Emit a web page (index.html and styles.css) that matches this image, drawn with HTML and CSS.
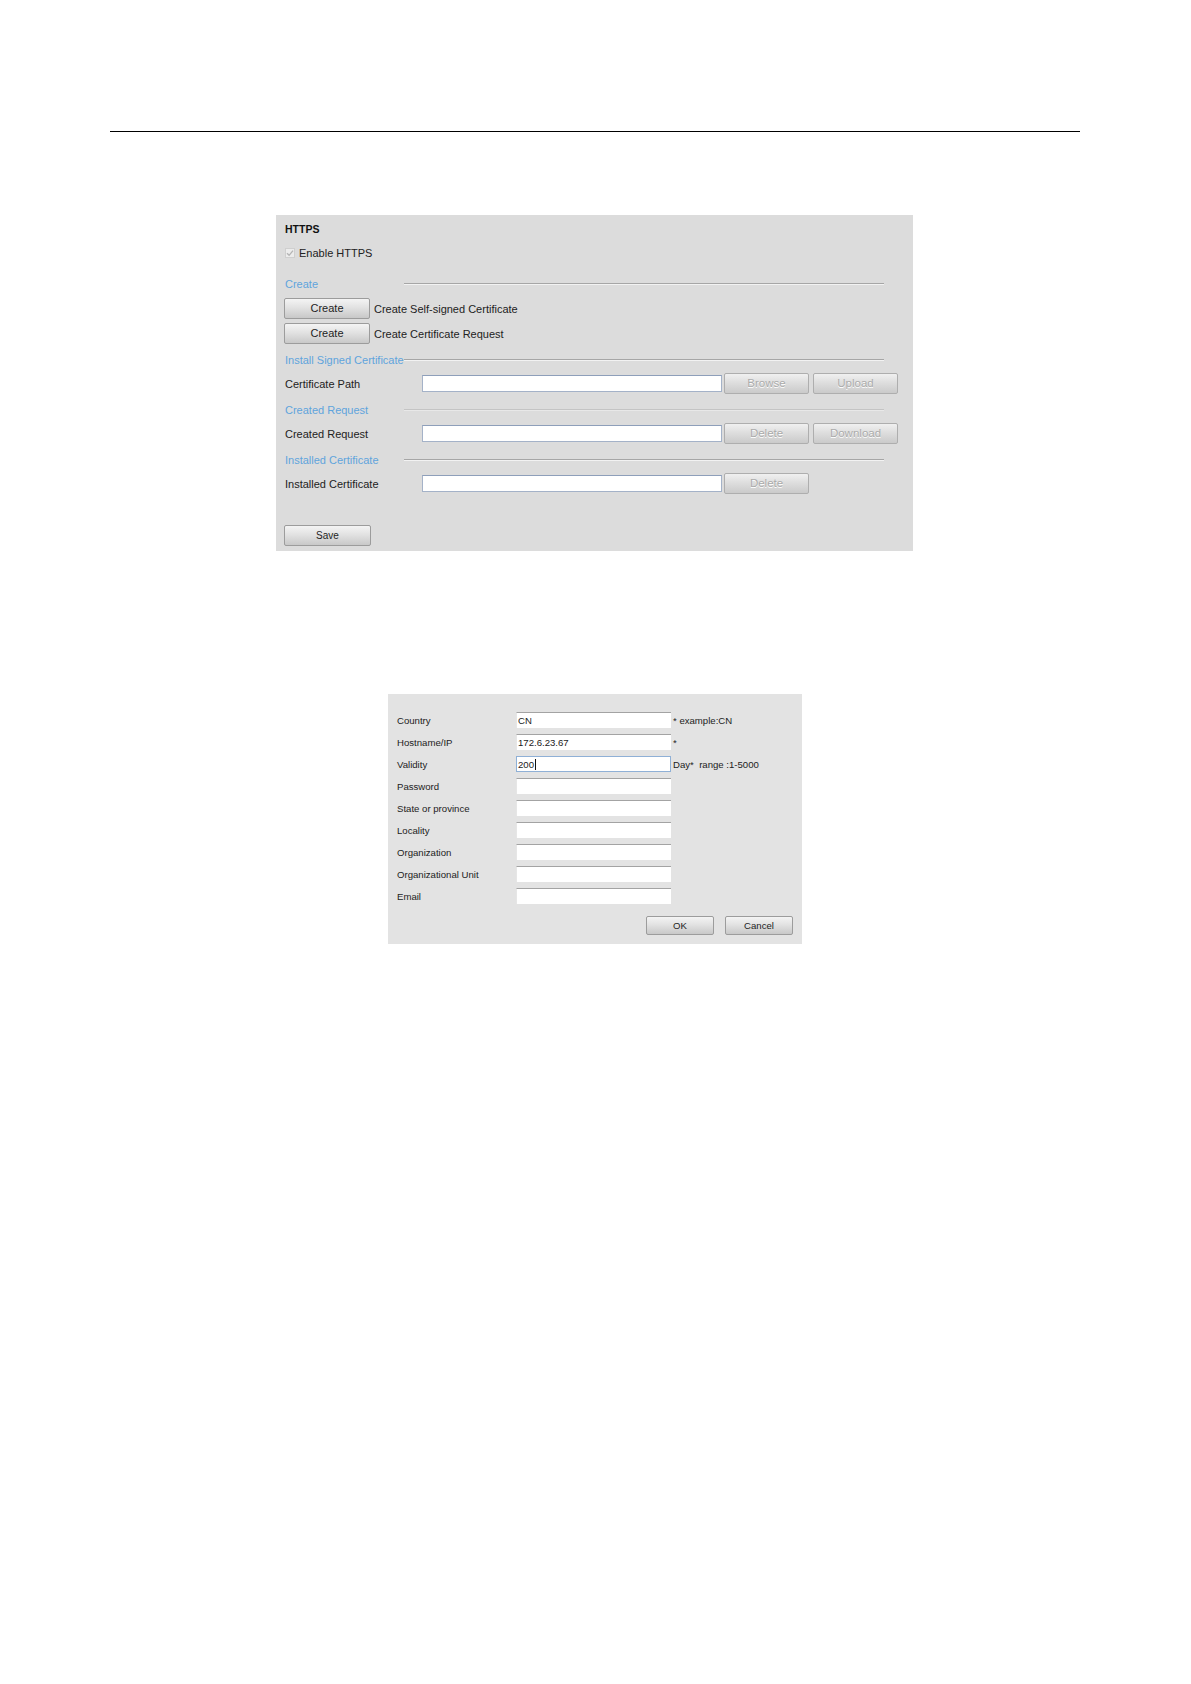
FILE: index.html
```html
<!DOCTYPE html>
<html>
<head>
<meta charset="utf-8">
<title>HTTPS</title>
<link rel="stylesheet" href="styles.css">
</head>
<body>
<div class="page">
  <div class="header-rule"></div>

  <div class="https-panel">
    <div class="title-row">HTTPS</div>
    <div class="check-row">
      <span class="checkbox"><svg width="8" height="8" viewBox="0 0 8 8"><path d="M1 4.2 L3.1 6.3 L7 1.6" fill="none" stroke="#b4b4b4" stroke-width="1.3"/></svg></span>
      <span>Enable HTTPS</span>
    </div>

    <div class="section s-create"><span class="section-label">Create</span><span class="section-line"></span></div>
    <div class="btn-row r1"><button class="btn btn-create">Create</button><span>Create Self-signed Certificate</span></div>
    <div class="btn-row r2"><button class="btn btn-create">Create</button><span>Create Certificate Request</span></div>

    <div class="section s-install"><span class="section-label">Install Signed Certificate</span><span class="section-line"></span></div>
    <div class="field-row">
      <span class="field-label">Certificate Path</span>
      <span class="field-input"></span>
      <button class="btn btn-off">Browse</button>
      <button class="btn btn-off">Upload</button>
    </div>

    <div class="section s-next"><span class="section-label">Created Request</span><span class="section-line faint"></span></div>
    <div class="field-row">
      <span class="field-label">Created Request</span>
      <span class="field-input"></span>
      <button class="btn btn-off">Delete</button>
      <button class="btn btn-off">Download</button>
    </div>

    <div class="section s-next"><span class="section-label">Installed Certificate</span><span class="section-line"></span></div>
    <div class="field-row">
      <span class="field-label">Installed Certificate</span>
      <span class="field-input"></span>
      <button class="btn btn-off">Delete</button>
    </div>

    <div class="save-row"><button class="btn btn-create">Save</button></div>
  </div>

  <div class="cert-dialog">
    <div class="form-row"><span class="form-label">Country</span><span class="form-input">CN</span><span class="form-hint">* example:CN</span></div>
    <div class="form-row"><span class="form-label">Hostname/IP</span><span class="form-input">172.6.23.67</span><span class="form-hint">*</span></div>
    <div class="form-row"><span class="form-label">Validity</span><span class="form-input focused">200<span class="caret"></span></span><span class="form-hint">Day*&nbsp; range :1-5000</span></div>
    <div class="form-row"><span class="form-label">Password</span><span class="form-input"></span></div>
    <div class="form-row"><span class="form-label">State or province</span><span class="form-input"></span></div>
    <div class="form-row"><span class="form-label">Locality</span><span class="form-input"></span></div>
    <div class="form-row"><span class="form-label">Organization</span><span class="form-input"></span></div>
    <div class="form-row"><span class="form-label">Organizational Unit</span><span class="form-input"></span></div>
    <div class="form-row"><span class="form-label">Email</span><span class="form-input"></span></div>
    <div class="dialog-actions">
      <button class="btn btn-dlg">OK</button>
      <button class="btn btn-dlg">Cancel</button>
    </div>
  </div>
</div>
</body>
</html>
```

FILE: styles.css
```css
* { box-sizing: border-box; }

html, body {
  margin: 0;
  padding: 0;
  background: #ffffff;
}

body {
  font-family: "Liberation Sans", Arial, sans-serif;
  color: #222222;
}

.page {
  width: 1191px;
  min-height: 1684px;
  padding-top: 131px;
}

.header-rule {
  margin-left: 110px;
  width: 970px;
  border-top: 1.4px solid #000000;
}

/* ---------- HTTPS panel ---------- */
.https-panel {
  margin-top: 83px;
  margin-left: 276px;
  width: 637px;
  height: 336px;
  background: #dcdcdc;
  padding: 6px 0 0 9px;
  font-size: 11px;
}

.title-row {
  height: 16px;
  line-height: 16px;
  font-weight: bold;
  font-size: 10.5px;
  color: #111;
}

.check-row {
  margin-top: 8px;
  height: 16px;
  display: flex;
  align-items: center;
  gap: 4px;
  color: #222;
}

.checkbox {
  width: 10px;
  height: 10px;
  background: #ececec;
  border: 1px solid #cfcfcf;
  display: flex;
  align-items: center;
  justify-content: center;
}

.section {
  height: 16px;
  display: flex;
  align-items: center;
}
.s-create { margin-top: 15px; }
.s-install { margin-top: 8px; }
.s-next { margin-top: 8px; }

.section-label {
  width: 119px;
  flex: none;
  white-space: nowrap;
  color: #5fa4dc;
  font-size: 11px;
  line-height: 16px;
}

.section-line {
  width: 480px;
  height: 2px;
  border-top: 1px solid #a6a6a6;
  border-bottom: 1px solid #f2f2f2;
  margin-top: -1px;
}
.section-line.faint {
  border-top-color: #c4c4c4;
  border-bottom-color: #e8e8e8;
}

.btn-row {
  height: 21px;
  display: flex;
  align-items: center;
  gap: 4px;
  margin-left: -1px;
}
.btn-row.r1 { margin-top: 6px; }
.btn-row.r2 { margin-top: 4px; }

.btn {
  font-family: "Liberation Sans", Arial, sans-serif;
  padding: 0;
  margin: 0;
  border: 1px solid #9c9c9c;
  border-radius: 2px;
  background: linear-gradient(#f4f4f4, #e2e2e2 45%, #c8c8c8);
  color: #1e1e1e;
  font-size: 11px;
  line-height: 1;
}

.btn-create {
  width: 86px;
  height: 21px;
}

.field-row {
  margin-top: 5px;
  height: 21px;
  display: flex;
  align-items: center;
}

.field-label {
  width: 137px;
  flex: none;
  white-space: nowrap;
}

.field-input {
  width: 300px;
  height: 17px;
  background: #ffffff;
  border: 1px solid #a4b2c8;
  border-top-color: #8e9fba;
  margin-right: 2px;
}

.btn-off {
  width: 85px;
  height: 21px;
  margin-right: 4px;
  color: #ababab;
  border-color: #aeaeae;
  background: linear-gradient(#f0f0f0, #dedede 45%, #cacaca);
  text-shadow: 0 1px 0 #ffffff;
  font-size: 11.5px;
}

.save-row {
  margin-top: 31px;
  height: 21px;
  margin-left: -1px;
}
.save-row .btn-create {
  width: 87px;
  font-size: 10px;
}

/* ---------- Certificate dialog ---------- */
.cert-dialog {
  margin-top: 143px;
  margin-left: 388px;
  width: 414px;
  height: 250px;
  background: #e3e3e3;
  padding: 18px 9px 9px 9px;
  font-size: 9.6px;
  display: flex;
  flex-direction: column;
  gap: 6px;
}

.form-row {
  height: 16px;
  display: flex;
  align-items: center;
}

.form-label {
  width: 119px;
  flex: none;
  white-space: nowrap;
  color: #1c1c1c;
}

.form-input {
  width: 155px;
  height: 16px;
  flex: none;
  background: #ffffff;
  border-top: 1px solid #a3a3a3;
  border-left: 1px solid #e6e6e6;
  padding-left: 1px;
  line-height: 15px;
  color: #1a1a1a;
  display: flex;
  align-items: center;
}

.form-input.focused {
  border: 1px solid #8fb0d6;
}

.caret {
  display: inline-block;
  width: 1px;
  height: 11px;
  background: #111;
  margin-left: 1px;
}

.form-hint {
  margin-left: 2px;
  white-space: nowrap;
  color: #1c1c1c;
}

.dialog-actions {
  margin-top: 6px;
  display: flex;
  justify-content: flex-end;
  gap: 11px;
}

.btn-dlg {
  width: 68px;
  height: 19px;
  font-size: 9.6px;
}
```
